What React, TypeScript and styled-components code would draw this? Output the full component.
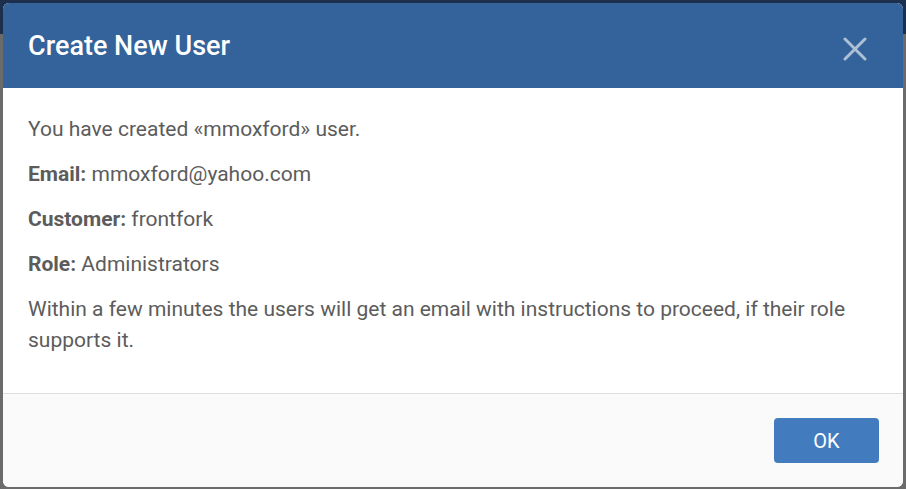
import React from "react";
import styled, { createGlobalStyle } from "styled-components";

const GlobalStyle = createGlobalStyle`
  html, body {
    margin: 0;
    padding: 0;
  }
  body {
    font-family: Roboto, "Liberation Sans", Arial, sans-serif;
    background: linear-gradient(to bottom, #1c2f4c 0, #1c2f4c 34px, #6b6b6b 34px, #6b6b6b 100%);
  }
  * { box-sizing: border-box; }
`;

const Backdrop = styled.div`
  width: 906px;
  height: 489px;
  padding: 3px 3px 2px 3px;
  display: flex;
  align-items: stretch;
  justify-content: center;
`;

const Dialog = styled.div`
  width: 900px;
  display: flex;
  flex-direction: column;
  background: #ffffff;
  border-radius: 6px;
  overflow: hidden;
`;

const Header = styled.div`
  height: 85px;
  flex: none;
  background: #34629a;
  padding: 0 24px 0 25px;
  display: flex;
  align-items: center;
  justify-content: space-between;
`;

const Title = styled.h2`
  margin: 0;
  font-size: 27px;
  font-weight: 500;
  color: #ffffff;
  line-height: normal;
`;

const CloseButton = styled.button`
  border: 0;
  background: none;
  padding: 0;
  margin: 6px 12px 0 0;
  width: 24px;
  height: 24px;
  display: flex;
  cursor: pointer;
  color: rgba(255, 255, 255, 0.6);
`;

const Body = styled.div`
  flex: 1;
  padding: 26px 24px 23px 25px;
  color: #5c5c5c;
  font-size: 21px;
  line-height: 31px;
`;

const Para = styled.p`
  margin: 0 0 14px 0;
`;

const Label = styled.strong`
  font-weight: 700;
`;

const Footer = styled.div`
  flex: none;
  background: #fafafa;
  border-top: 1px solid #dddddd;
  padding: 24px 24px 24px 24px;
  display: flex;
  justify-content: flex-end;
`;

const OkButton = styled.button`
  width: 105px;
  height: 45px;
  border: 0;
  border-radius: 4px;
  background: #427cbf;
  color: #ffffff;
  font-family: Roboto, "Liberation Sans", Arial, sans-serif;
  font-size: 20px;
  font-weight: 400;
  cursor: pointer;
`;

const CloseIcon = () => (
  <svg width="24" height="24" viewBox="0 0 24 24" fill="none">
    <path
      d="M2 2 L22 22 M22 2 L2 22"
      stroke="currentColor"
      strokeWidth="3"
      strokeLinecap="round"
    />
  </svg>
);

export default function App() {
  return (
    <>
      <GlobalStyle />
      <Backdrop>
        <Dialog>
          <Header>
            <Title>Create New User</Title>
            <CloseButton aria-label="Close">
              <CloseIcon />
            </CloseButton>
          </Header>
          <Body>
            <Para>You have created «mmoxford» user.</Para>
            <Para>
              <Label>Email:</Label> mmoxford@yahoo.com
            </Para>
            <Para>
              <Label>Customer:</Label> frontfork
            </Para>
            <Para>
              <Label>Role:</Label> Administrators
            </Para>
            <Para>
              Within a few minutes the users will get an email with instructions
              to proceed, if their role supports it.
            </Para>
          </Body>
          <Footer>
            <OkButton>OK</OkButton>
          </Footer>
        </Dialog>
      </Backdrop>
    </>
  );
}
